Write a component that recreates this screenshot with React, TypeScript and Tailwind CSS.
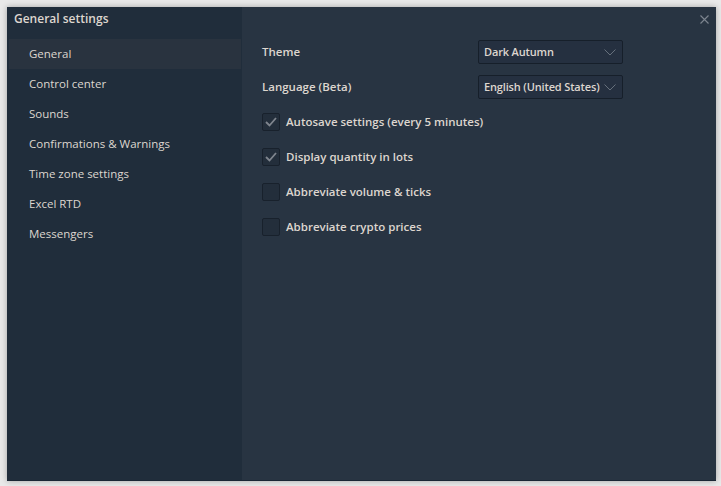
import { useState } from 'react';

const menuItems = [
    'General',
    'Control center',
    'Sounds',
    'Confirmations & Warnings',
    'Time zone settings',
    'Excel RTD',
    'Messengers',
];

const options = [
    { label: 'Autosave settings (every 5 minutes)', checked: true },
    { label: 'Display quantity in lots', checked: true },
    { label: 'Abbreviate volume & ticks', checked: false },
    { label: 'Abbreviate crypto prices', checked: false },
];

function Chevron() {
    return (
        <svg width="12" height="7" viewBox="0 0 12 7" fill="none" className="shrink-0">
            <path d="M0.5 0.5l5.5 5.5 5.5-5.5" stroke="#66707c" strokeWidth="1" />
        </svg>
    );
}

function Select({ value }: { value: string }) {
    return (
        <div className="flex h-[24px] w-[145px] items-center justify-between gap-[3px] rounded-[2px] border border-[#161f2a] bg-[#253040] pl-[5px] pr-[6px] text-[11px] tracking-[-0.15px] text-[#ddd6cf]">
            <span className="whitespace-nowrap">{value}</span>
            <Chevron />
        </div>
    );
}

export default function App() {
    const [active] = useState(0);

    return (
        <div
            className="flex h-[486px] w-[721px] bg-[#e9e9e9] pl-[7px] pr-[5px] pt-[7px] pb-[5px] text-[11.5px] text-[#ddd6cf]"
            style={{ fontFamily: '"Open Sans", "Noto Sans", sans-serif' }}
        >
            <div className="flex flex-1 border-b border-[#1b2634] shadow-[0_0_6px_rgba(0,0,0,0.3)]">
                {/* Sidebar */}
                <div className="flex w-[235px] flex-col bg-[#202d3b]">
                    <div className="h-[32px] pl-[7px] pt-[3px] text-[12px] font-semibold">
                        General settings
                    </div>
                    <div className="flex flex-col pl-[2px] pr-[1px]">
                        {menuItems.map((item, i) => (
                            <div
                                key={item}
                                className={
                                    'flex h-[30px] items-center pl-[20px] ' +
                                    (i === active ? 'bg-[#29333f]' : '')
                                }
                            >
                                {item}
                            </div>
                        ))}
                    </div>
                </div>

                {/* Content */}
                <div className="relative flex flex-1 flex-col bg-[#283442] pl-[20px] pt-[33px]">
                    <button className="absolute right-[7px] top-[7px] flex h-[10px] w-[10px] items-center justify-center">
                        <svg width="9" height="9" viewBox="0 0 9 9">
                            <path d="M0.5 0.5l8 8M8.5 0.5l-8 8" stroke="#7d8590" strokeWidth="1.1" />
                        </svg>
                    </button>

                    <div className="flex flex-col gap-[11px] font-semibold">
                        <div className="flex items-center">
                            <span className="w-[216px]">Theme</span>
                            <Select value="Dark Autumn" />
                        </div>
                        <div className="flex items-center">
                            <span className="w-[216px]">Language (Beta)</span>
                            <Select value="English (United States)" />
                        </div>
                    </div>

                    <div className="mt-[14px] flex flex-col gap-[17px] font-semibold">
                        {options.map((opt) => (
                            <label key={opt.label} className="flex items-center gap-[6px]">
                                <span className="flex h-[18px] w-[18px] items-center justify-center rounded-[2px] border border-[#18212c] bg-[#232e3b]">
                                    {opt.checked && (
                                        <svg width="12" height="10" viewBox="0 0 12 10" fill="none">
                                            <path d="M1 5l3.5 3.5L11 1" stroke="#7f858e" strokeWidth="1.8" />
                                        </svg>
                                    )}
                                </span>
                                <span>{opt.label}</span>
                            </label>
                        ))}
                    </div>
                </div>
            </div>
        </div>
    );
}
